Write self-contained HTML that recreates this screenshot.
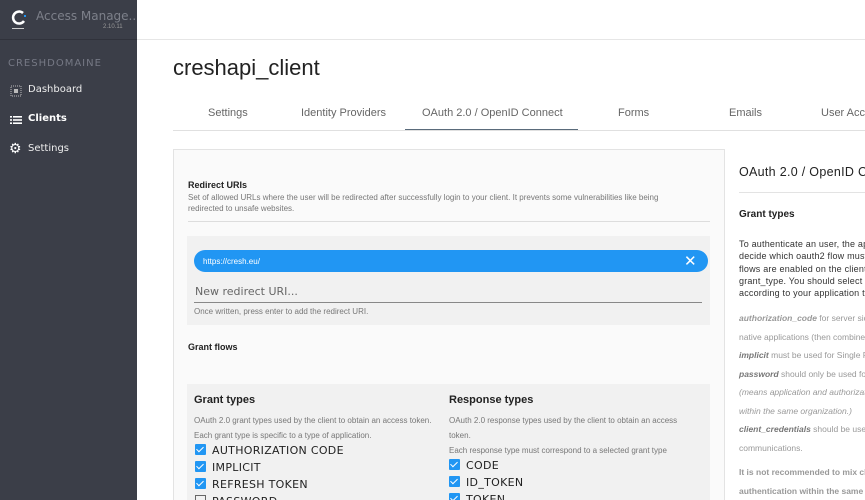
<!DOCTYPE html>
<html style="width:865px;height:500px;overflow:hidden"><head><style>
*{margin:0;padding:0;box-sizing:border-box}
body{width:865px;height:500px;overflow:hidden;background:#fff;font-family:"Liberation Sans",sans-serif;position:relative}
.sb{position:absolute;left:0;top:0;width:137px;height:500px;background:#3b3e48;color:#fff;overflow:hidden}
.abs{position:absolute;white-space:nowrap}
.cb{display:inline-block;width:11px;height:11px;background:#2196f3;border-radius:1px;vertical-align:-1px;margin-right:6px;position:relative}
.cb:after{content:"";position:absolute;left:3px;top:1px;width:3px;height:6px;border:solid #fff;border-width:0 1px 1px 0;transform:rotate(45deg)}
.cbe{display:inline-block;width:11px;height:11px;border:1px solid #666;vertical-align:-1px;margin-right:6px}
.lab{font-family:"DejaVu Sans",sans-serif;font-size:11px;color:#222;letter-spacing:0.3px}
.sm{font-size:8px;color:#777}
.rt{font-size:9px;color:#333;line-height:12.3px;letter-spacing:0.2px}
.gi{font-size:8.5px;color:#999;line-height:18.5px}
</style></head><body>
<div class="sb">
  <svg class="abs" style="left:10px;top:9px" width="18" height="22" viewBox="0 0 18 22"><path d="M13 4 A6 6 0 1 0 14 12" fill="none" stroke="#fff" stroke-width="2.5"/><rect x="14" y="6" width="2" height="2" fill="#2196f3"/><rect x="2" y="19" width="12" height="1" fill="#ccc"/></svg>
  <div class="abs" style="left:36px;top:9px;font-size:12px;color:#7d808a;font-family:'DejaVu Sans',sans-serif">Access Manage...</div>
  <div class="abs" style="left:103px;top:24px;font-size:6px;color:#999">2.10.11</div>
  <div class="abs" style="left:0;top:39px;width:137px;height:1px;background:#30323b"></div>
  <div class="abs" style="left:8px;top:58px;font-size:10px;color:#767985;letter-spacing:1px;font-family:'DejaVu Sans',sans-serif">CRESHDOMAINE</div>
  <svg class="abs" style="left:10px;top:85px" width="12" height="12"><g fill="#bbb"><rect x="1" y="1" width="10" height="10" fill="none" stroke="#bbb" stroke-dasharray="1 1"/><rect x="4" y="4" width="4" height="4"/></g></svg>
  <div class="abs" style="left:28px;top:84px;font-size:10px;font-family:'DejaVu Sans',sans-serif;color:#eee">Dashboard</div>
  <svg class="abs" style="left:10px;top:115px" width="12" height="10"><g fill="#fff"><rect x="0" y="1" width="2" height="1.6"/><rect x="3" y="1" width="9" height="1.6"/><rect x="0" y="4.2" width="2" height="1.6"/><rect x="3" y="4.2" width="9" height="1.6"/><rect x="0" y="7.4" width="2" height="1.6"/><rect x="3" y="7.4" width="9" height="1.6"/></g></svg>
  <div class="abs" style="left:28px;top:113px;font-size:10px;font-weight:bold;font-family:'DejaVu Sans',sans-serif">Clients</div>
  <div class="abs" style="left:9px;top:140px;font-size:14px;color:#fff">⚙</div>
  <div class="abs" style="left:28px;top:143px;font-size:10px;font-family:'DejaVu Sans',sans-serif;color:#eee">Settings</div>
</div>
<div class="abs" style="left:137px;top:39px;width:728px;height:1px;background:#e6e6e6"></div>
<div class="abs" style="left:173px;top:55px;font-size:22px;color:#222">creshapi_client</div>
<div class="abs" style="left:173px;top:130px;width:692px;height:1px;background:#e0e0e0"></div>
<div class="abs" style="left:405px;top:129px;width:173px;height:1px;background:#5a6b7b"></div>
<div class="abs" style="left:208px;top:107px;font-size:11px;color:#666">Settings</div>
<div class="abs" style="left:301px;top:107px;font-size:11px;color:#666">Identity Providers</div>
<div class="abs" style="left:422px;top:107px;font-size:11px;color:#666">OAuth 2.0 / OpenID Connect</div>
<div class="abs" style="left:618px;top:107px;font-size:11px;color:#666">Forms</div>
<div class="abs" style="left:729px;top:107px;font-size:11px;color:#666">Emails</div>
<div class="abs" style="left:821px;top:107px;font-size:11px;color:#666">User Acc</div>

<div class="abs" style="left:173px;top:149px;width:552px;height:351px;background:#fafafa;border:1px solid #e3e3e3;border-bottom:none"></div>
<div class="abs" style="left:188px;top:180px;font-size:9px;font-weight:bold;color:#222">Redirect URIs</div>
<div class="abs sm" style="left:188px;top:192px;line-height:11px">Set of allowed URLs where the user will be redirected after successfully login to your client. It prevents some vulnerabilities like being<br>redirected to unsafe websites.</div>
<div class="abs" style="left:188px;top:221px;width:522px;height:1px;background:#ddd"></div>
<div class="abs" style="left:187px;top:236px;width:523px;height:89px;background:#f1f1f1"></div>
<div class="abs" style="left:194px;top:250px;width:514px;height:22px;background:#2196f3;border-radius:11px"></div>
<div class="abs" style="left:203px;top:257px;font-size:8px;color:#fff">https://cresh.eu/</div>
<div class="abs" style="left:684px;top:252px;font-size:15px;color:#fff">✕</div>
<div class="abs" style="left:195px;top:285px;font-size:11px;color:#666;font-family:'DejaVu Sans',sans-serif">New redirect URI...</div>
<div class="abs" style="left:194px;top:302px;width:508px;height:1px;background:#888"></div>
<div class="abs sm" style="left:194px;top:307px">Once written, press enter to add the redirect URI.</div>
<div class="abs" style="left:188px;top:342px;font-size:9px;font-weight:bold;color:#222">Grant flows</div>

<div class="abs" style="left:187px;top:384px;width:523px;height:116px;background:#f1f1f1"></div>
<div class="abs" style="left:194px;top:394px;font-size:11px;font-weight:bold;color:#222">Grant types</div>
<div class="abs sm" style="left:194px;top:413px;line-height:15px">OAuth 2.0 grant types used by the client to obtain an access token.<br>Each grant type is specific to a type of application.</div>
<div class="abs lab" style="left:195px;top:444px"><span class="cb"></span>AUTHORIZATION CODE</div>
<div class="abs lab" style="left:195px;top:461px"><span class="cb"></span>IMPLICIT</div>
<div class="abs lab" style="left:195px;top:478px"><span class="cb"></span>REFRESH TOKEN</div>
<div class="abs lab" style="left:195px;top:495px"><span class="cbe"></span>PASSWORD</div>
<div class="abs" style="left:449px;top:394px;font-size:11px;font-weight:bold;color:#222">Response types</div>
<div class="abs sm" style="left:449px;top:413px;line-height:15px">OAuth 2.0 response types used by the client to obtain an access<br>token.<br>Each response type must correspond to a selected grant type</div>
<div class="abs lab" style="left:449px;top:459px"><span class="cb"></span>CODE</div>
<div class="abs lab" style="left:449px;top:476px"><span class="cb"></span>ID_TOKEN</div>
<div class="abs lab" style="left:449px;top:493px"><span class="cb"></span>TOKEN</div>

<div class="abs" style="left:739px;top:165px;font-size:12.5px;color:#222;letter-spacing:0.3px">OAuth 2.0 / OpenID Connect</div>
<div class="abs" style="left:739px;top:192px;width:126px;height:1px;background:#e3e3e3"></div>
<div class="abs" style="left:739px;top:209px;font-size:10px;font-weight:bold;color:#222">Grant types</div>
<div class="abs rt" style="left:739px;top:238px">To authenticate an user, the application must<br>decide which oauth2 flow must be used. Which<br>flows are enabled on the client is defined by<br>grant_type. You should select the appropriate<br>according to your application type.</div>
<div class="abs gi" style="left:739px;top:309px"><b><i>authorization_code</i></b> for server side and<br>native applications (then combined with PKCE)<br><b style="color:#777"><i>implicit</i></b> must be used for Single Page Apps<br><b style="color:#777"><i>password</i></b> should only be used for trusted<br><i>(means application and authorization server<br>within the same organization.)</i><br><b style="color:#777"><i>client_credentials</i></b> should be used for server<br>communications.</div>
<div class="abs gi" style="left:739px;top:463px;height:37px;overflow:hidden"><b>It is not recommended to mix client and user<br>authentication within the same application</b><br><i>client_credentials and authorization_code or<br>password)</i></div>
</body></html>
